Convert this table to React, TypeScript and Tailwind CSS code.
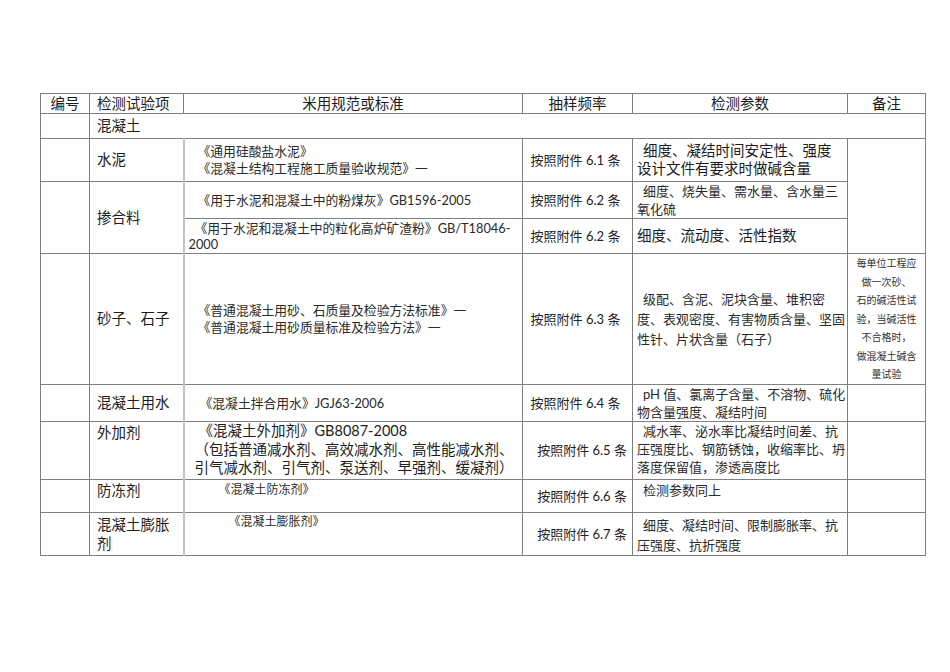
import React from "react";

const td = "border border-[#7f7f7f] p-0";
// standards column has a lighter, doubled-looking left rule in the body rows
const std = "border border-[#7f7f7f] border-l-2 border-l-[#c4c4c4] p-0";

function Freq({ n, right }: { n: string; right?: boolean }) {
  return (
    <div
      className={`text-[13px] leading-[17px] text-[#222] whitespace-nowrap ${
        right ? "text-right pr-[5px]" : "text-center pr-[4px]"
      }`}
    >
      按照附件 {n} 条
    </div>
  );
}

export default function App() {
  return (
    <div className="w-[950px] h-[672px] bg-white pt-[93px] pl-[40px] font-['Lato','Noto_Sans_CJK_SC',sans-serif] text-[#1c1c1c]">
      <table className="table-fixed border-collapse w-[885px]">
        <colgroup>
          <col className="w-[49px]" />
          <col className="w-[94px]" />
          <col className="w-[339px]" />
          <col className="w-[110px]" />
          <col className="w-[215px]" />
          <col className="w-[78px]" />
        </colgroup>
        <tbody>
          {/* 表头 */}
          <tr className="h-[20px] text-[14.5px] leading-[18px]">
            <td className={`${td} text-center`}>编号</td>
            <td className={`${td} pl-[7px]`}>检测试验项</td>
            <td className={`${td} text-center`}>米用规范或标准</td>
            <td className={`${td} text-center`}>抽样频率</td>
            <td className={`${td} text-center`}>检测参数</td>
            <td className={`${td} text-center`}>备注</td>
          </tr>

          <tr className="h-[25px] text-[14.5px] leading-[18px]">
            <td className={td}></td>
            <td className={`${td} pl-[7px]`} colSpan={5}>
              混凝土
            </td>
          </tr>

          {/* 水泥 */}
          <tr className="h-[43px]">
            <td className={td}></td>
            <td className={`${td} pl-[7px] text-[14.5px] leading-[18px]`}>水泥</td>
            <td className={`${std} pl-[13px] text-[12.8px] leading-[17px] text-[#2a2a2a] whitespace-nowrap`}>
              《通用硅酸盐水泥》
              <br />
              《混凝土结构工程施工质量验收规范》一
            </td>
            <td className={td}>
              <Freq n="6.1" />
            </td>
            <td className={`${td} pl-[4px] text-[14.5px] leading-[18px] whitespace-nowrap`}>
              <span className="pl-[6px]">细度、凝结时间安定性、强度</span>
              <br />
              设计文件有要求时做碱含量
            </td>
            <td className={td} rowSpan={3}></td>
          </tr>

          {/* 掺合料 */}
          <tr className="h-[37px]">
            <td className={td} rowSpan={2}></td>
            <td className={`${td} pl-[7px] text-[14.5px] leading-[18px]`} rowSpan={2}>
              掺合料
            </td>
            <td className={`${std} pl-[13px] text-[12.8px] leading-[17px] text-[#2a2a2a] whitespace-nowrap`}>
              《用于水泥和混凝土中的粉煤灰》GB1596-2005
            </td>
            <td className={td}>
              <Freq n="6.2" />
            </td>
            <td className={`${td} pl-[4px] text-[13px] leading-[18px] text-[#2a2a2a] whitespace-nowrap`}>
              <span className="pl-[6px]">细度、烧失量、需水量、含水量三</span>
              <br />
              氧化硫
            </td>
          </tr>
          <tr className="h-[35px]">
            <td className={`${std} pl-[4px] text-[12.8px] leading-[16px] text-[#2a2a2a] whitespace-nowrap`}>
              <span className="pl-[6px]">《用于水泥和混凝土中的粒化高炉矿渣粉》GB/T18046-</span>
              <br />
              2000
            </td>
            <td className={td}>
              <Freq n="6.2" />
            </td>
            <td className={`${td} pl-[4px] text-[14.5px] leading-[18px] whitespace-nowrap`}>
              细度、流动度、活性指数
            </td>
          </tr>

          {/* 砂子、石子 */}
          <tr className="h-[131px]">
            <td className={td}></td>
            <td className={`${td} pl-[7px] text-[14.5px] leading-[18px]`}>砂子、石子</td>
            <td className={`${std} pl-[13px] text-[12.8px] leading-[17px] text-[#2a2a2a] whitespace-nowrap`}>
              《普通混凝土用砂、石质量及检验方法标准》一
              <br />
              《普通混凝土用砂质量标准及检验方法》一
            </td>
            <td className={td}>
              <Freq n="6.3" />
            </td>
            <td className={`${td} pl-[4px] text-[13px] leading-[20px] text-[#2a2a2a] whitespace-nowrap`}>
              <span className="pl-[6px]">级配、含泥、泥块含量、堆积密</span>
              <br />
              度、表观密度、有害物质含量、坚固
              <br />
              性针、片状含量（石子）
            </td>
            <td className={`${td} text-center text-[10px] leading-[18.5px] text-[#333]`}>
              每单位工程应
              <br />
              做一次砂、
              <br />
              石的碱活性试
              <br />
              验，当碱活性
              <br />
              不合格时，
              <br />
              做混凝土碱含
              <br />
              量试验
            </td>
          </tr>

          {/* 混凝土用水 */}
          <tr className="h-[37px]">
            <td className={td}></td>
            <td className={`${td} pl-[7px] text-[14.5px] leading-[18px]`}>混凝土用水</td>
            <td className={`${std} pl-[15px] text-[12.8px] leading-[17px] text-[#2a2a2a] whitespace-nowrap`}>
              《混凝土拌合用水》JGJ63-2006
            </td>
            <td className={td}>
              <Freq n="6.4" />
            </td>
            <td className={`${td} pl-[4px] text-[13px] leading-[18px] text-[#2a2a2a] whitespace-nowrap`}>
              <span className="pl-[6px]">pH 值、氯离子含量、不溶物、硫化</span>
              <br />
              物含量强度、凝结时间
            </td>
            <td className={td}></td>
          </tr>

          {/* 外加剂 */}
          <tr className="h-[58px]">
            <td className={td}></td>
            <td className={`${td} pl-[7px] pt-[2px] align-top text-[14.5px] leading-[18px]`}>外加剂</td>
            <td className={`${std} pl-[10px] align-top text-[14.5px] leading-[18.5px] whitespace-nowrap`}>
              <span className="pl-[4px]">《混凝土外加剂》GB8087-2008</span>
              <br />
              （包括普通减水剂、高效减水剂、高性能减水剂、
              <br />
              引气减水剂、引气剂、泵送剂、早强剂、缓凝剂）
            </td>
            <td className={td}>
              <Freq n="6.5" right />
            </td>
            <td className={`${td} pl-[4px] align-top text-[13px] leading-[18px] text-[#2a2a2a] whitespace-nowrap`}>
              <span className="pl-[6px]">减水率、泌水率比凝结时间差、抗</span>
              <br />
              压强度比、钢筋锈蚀，收缩率比、坍
              <br />
              落度保留值，渗透高度比
            </td>
            <td className={td}></td>
          </tr>

          {/* 防冻剂 */}
          <tr className="h-[33px]">
            <td className={td}></td>
            <td className={`${td} pl-[7px] pt-[2px] align-top text-[14.5px] leading-[18px]`}>防冻剂</td>
            <td className={`${std} pl-[34px] pt-[2px] align-top text-[12px] leading-[16px] text-[#2a2a2a] whitespace-nowrap`}>
              《混凝土防冻剂》
            </td>
            <td className={td}>
              <Freq n="6.6" right />
            </td>
            <td className={`${td} pl-[10px] pt-[1px] align-top text-[13px] leading-[18px] text-[#2a2a2a]`}>
              检测参数同上
            </td>
            <td className={td}></td>
          </tr>

          {/* 混凝土膨胀剂 */}
          <tr className="h-[40px]">
            <td className={td}></td>
            <td className={`${td} pl-[7px] pt-[2px] align-top text-[14.5px] leading-[19px]`}>
              混凝土膨胀
              <br />
              剂
            </td>
            <td className={`${std} pl-[44px] pt-[1px] align-top text-[12px] leading-[16px] text-[#2a2a2a] whitespace-nowrap`}>
              《混凝土膨胀剂》
            </td>
            <td className={td}>
              <Freq n="6.7" right />
            </td>
            <td className={`${td} pl-[4px] pt-[2px] align-top text-[13px] leading-[20px] text-[#2a2a2a] whitespace-nowrap`}>
              <span className="pl-[6px]">细度、凝结时间、限制膨胀率、抗</span>
              <br />
              压强度、抗折强度
            </td>
            <td className={td}></td>
          </tr>
        </tbody>
      </table>
    </div>
  );
}
